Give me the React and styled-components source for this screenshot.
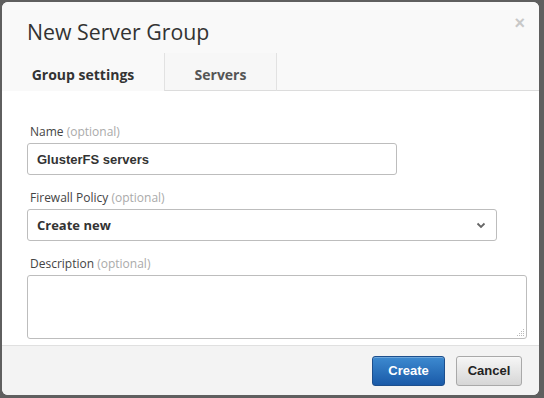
import React from "react";
import styled, { createGlobalStyle } from "styled-components";

const Global = createGlobalStyle`
  html, body { margin: 0; padding: 0; background: #5f5f5f; }
  body { width: 544px; height: 398px; overflow: hidden; font-family: "Open Sans", sans-serif; }
`;

const Backdrop = styled.div`
  padding: 2px 5px 3px 2px;
  height: 398px;
  box-sizing: border-box;
`;

const Modal = styled.div`
  width: 537px;
  height: 393px;
  background: #fff;
  border-radius: 6px;
  overflow: hidden;
  display: flex;
  flex-direction: column;
  position: relative;
`;

const Header = styled.div`
  background: #f9f9f9;
  padding-top: 16px;
  display: flex;
  flex-direction: column;
`;

const Title = styled.h1`
  margin: 0 0 0 25px;
  font-family: "Open Sans", sans-serif;
  font-weight: 400;
  font-size: 21.3px;
  line-height: 28px;
  color: #333;
  height: 35px;
`;

const Close = styled.span`
  position: absolute;
  top: 11px;
  right: 14px;
  font-family: "Liberation Sans", Arial, sans-serif;
  font-weight: 700;
  font-size: 18px;
  color: #c8c8c8;
`;

const Tabs = styled.div`
  display: flex;
  height: 38px;
`;

const Tab = styled.div`
  width: ${(p) => p.$w}px;
  box-sizing: border-box;
  display: flex;
  align-items: center;
  justify-content: center;
  font-family: "Open Sans", sans-serif;
  font-weight: 700;
  font-size: 14px;
  color: ${(p) => (p.$active ? "#333" : "#555")};
  background: ${(p) => (p.$active ? "#f9f9f9" : "#f7f7f7")};
  border-left: ${(p) => (p.$active ? "none" : "1px solid #e2e2e2")};
  border-right: ${(p) => (p.$active ? "none" : "1px solid #e2e2e2")};
  border-bottom: ${(p) => (p.$active ? "none" : "1px solid #dcdcdc")};
  padding-top: 5px;
`;

const TabFill = styled.div`
  flex: 1;
  border-bottom: 1px solid #dcdcdc;
`;

const Body = styled.div`
  flex: 1;
  padding: 32px 0 0 25px;
  display: flex;
  flex-direction: column;
`;

const Field = styled.div`
  display: flex;
  flex-direction: column;
  margin-bottom: ${(p) => p.$mb}px;
`;

const Label = styled.label`
  font-family: "Open Sans", sans-serif;
  font-size: 12px;
  line-height: 16px;
  color: #444;
  margin: 0 0 3px 3px;
  padding-top: 1px;
  span { color: #aaa; }
`;

const Input = styled.div`
  width: ${(p) => p.$w}px;
  height: ${(p) => p.$h}px;
  box-sizing: border-box;
  border: 1px solid #bdbdbd;
  border-radius: 3px;
  background: #fff;
  display: flex;
  align-items: center;
  padding: 0 10px 0 9px;
  position: relative;
`;

const InputText = styled.span`
  font-family: "Liberation Sans", Arial, sans-serif;
  font-weight: 700;
  font-size: 13px;
  color: #333;
`;

const SelectText = styled.span`
  font-family: "Open Sans", sans-serif;
  font-weight: 700;
  font-size: 13px;
  color: #333;
  flex: 1;
`;

const Grip = styled.svg`
  position: absolute;
  right: 1px;
  bottom: 1px;
`;

const Footer = styled.div`
  height: 49px;
  background: #f3f3f3;
  border-top: 1px solid #e0e0e0;
  display: flex;
  justify-content: flex-end;
  align-items: center;
  gap: 11px;
  padding-right: 17px;
`;

const Button = styled.button`
  width: ${(p) => p.$w}px;
  height: 30px;
  box-sizing: border-box;
  border-radius: 3px;
  font-family: "Liberation Sans", Arial, sans-serif;
  font-weight: 700;
  font-size: 13px;
  padding: 0;
  border: 1px solid ${(p) => (p.$primary ? "#1d4f8d" : "#a9a9a9")};
  color: ${(p) => (p.$primary ? "#fff" : "#222")};
  background: ${(p) =>
    p.$primary
      ? "linear-gradient(#3d8ad0, #1a5aa8)"
      : "linear-gradient(#f6f6f6, #d6d6d6)"};
  box-shadow: inset 0 1px 0 rgba(255,255,255,0.25);
`;

export default function App() {
  return (
    <>
      <Global />
      <Backdrop>
        <Modal>
          <Close>×</Close>
          <Header>
            <Title>New Server Group</Title>
            <Tabs>
              <Tab $active $w={162}>Group settings</Tab>
              <Tab $w={113}>Servers</Tab>
              <TabFill />
            </Tabs>
          </Header>
          <Body>
            <Field $mb={14}>
              <Label>Name <span>(optional)</span></Label>
              <Input $w={370} $h={32}>
                <InputText>GlusterFS servers</InputText>
              </Input>
            </Field>
            <Field $mb={14}>
              <Label>Firewall Policy <span>(optional)</span></Label>
              <Input $w={470} $h={32}>
                <SelectText>Create new</SelectText>
                <svg width="10" height="7" viewBox="0 0 10 7">
                  <path d="M1.5 1.5 L5 5 L8.5 1.5" fill="none" stroke="#666" strokeWidth="1.8" />
                </svg>
              </Input>
            </Field>
            <Field $mb={0}>
              <Label>Description <span>(optional)</span></Label>
              <Input $w={500} $h={64}>
                <Grip width="8" height="8" viewBox="0 0 8 8">
                  <g fill="#bbb">
                    <rect x="6" y="0" width="1" height="1" />
                    <rect x="4" y="2" width="1" height="1" />
                    <rect x="6" y="2" width="1" height="1" />
                    <rect x="2" y="4" width="1" height="1" />
                    <rect x="4" y="4" width="1" height="1" />
                    <rect x="6" y="4" width="1" height="1" />
                    <rect x="0" y="6" width="1" height="1" />
                    <rect x="2" y="6" width="1" height="1" />
                    <rect x="4" y="6" width="1" height="1" />
                    <rect x="6" y="6" width="1" height="1" />
                  </g>
                </Grip>
              </Input>
            </Field>
          </Body>
          <Footer>
            <Button $primary $w={73}>Create</Button>
            <Button $w={66}>Cancel</Button>
          </Footer>
        </Modal>
      </Backdrop>
    </>
  );
}
